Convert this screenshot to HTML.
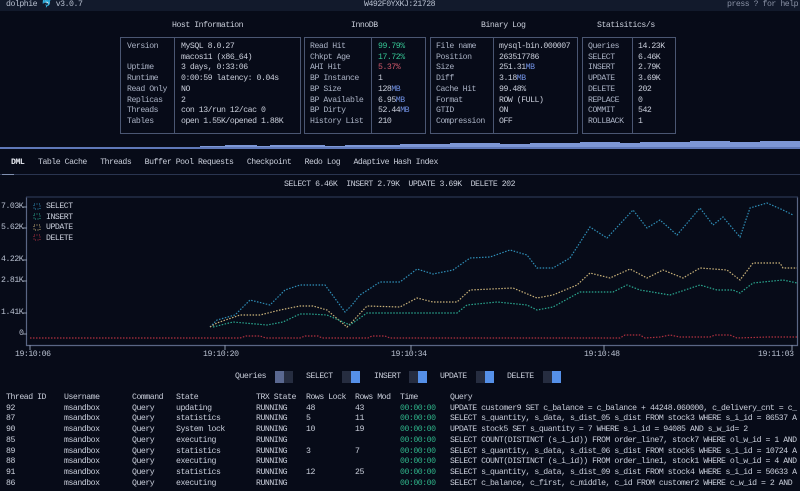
<!DOCTYPE html>
<html><head><meta charset="utf-8"><style>
*{margin:0;padding:0;box-sizing:border-box}
body{width:800px;height:491px;background:#070b18;color:#c9ceda;font-family:"Liberation Mono","DejaVu Sans Mono",monospace;font-size:8.2px;letter-spacing:-0.47px;line-height:10.7px;position:relative;overflow:hidden}
.a{position:absolute;white-space:pre}
.hdr{position:absolute;left:0;top:0;width:800px;height:11px;background:#121a2c}
.box{position:absolute;border:1px solid #4a5672}
.vl{position:absolute;top:0;bottom:0;width:1px;background:#4a5672}
.g{color:#35c493}.r{color:#d0586a}.b{color:#6f8fe0}
.lab{color:#aab2c4}
.tm{color:#2fb58a}
.sw{position:absolute;top:371px;width:18px;height:12px}
.sw i{position:absolute;top:0;width:9px;height:12px}
</style></head><body>
<div class="hdr"></div>
<div class="a" style="left:6px;top:0;color:#b8c0d0">dolphie <span style="color:#5aa8e0">🐬</span> v3.0.7</div>
<div class="a" style="left:364px;top:0;color:#b8c0d0">W492F0YXKJ:21728</div>
<div class="a" style="left:727px;top:0;color:#8890a4">press ? for help</div>

<div class="a" style="left:172px;top:21px">Host Information</div>
<div class="a" style="left:351px;top:21px">InnoDB</div>
<div class="a" style="left:481px;top:21px">Binary Log</div>
<div class="a" style="left:597px;top:21px">Statisitics/s</div>

<div class="box" style="left:120px;top:37px;width:181px;height:97px"><div class="vl" style="left:53px"></div></div>
<div class="a lab" style="left:127px;top:42px">Version
 
Uptime
Runtime
Read Only
Replicas
Threads
Tables</div>
<div class="a" style="left:181px;top:42px">MySQL 8.0.27
macos11 (x86_64)
3 days, 0:33:06
0:00:59 latency: 0.04s
NO
2
con 13/run 12/cac 0
open 1.55K/opened 1.88K</div>

<div class="box" style="left:304px;top:37px;width:122px;height:97px"><div class="vl" style="left:66px"></div></div>
<div class="a lab" style="left:310px;top:42px">Read Hit
Chkpt Age
AHI Hit
BP Instance
BP Size
BP Available
BP Dirty
History List</div>
<div class="a" style="left:378px;top:42px"><span class="g">99.79%</span>
<span class="g">17.72%</span>
<span class="r">5.37%</span>
1
128<span class="b">MB</span>
6.95<span class="b">MB</span>
52.44<span class="b">MB</span>
210</div>

<div class="box" style="left:430px;top:37px;width:148px;height:97px"><div class="vl" style="left:62px"></div></div>
<div class="a lab" style="left:436px;top:42px">File name
Position
Size
Diff
Cache Hit
Format
GTID
Compression</div>
<div class="a" style="left:499px;top:42px">mysql-bin.000007
263517786
251.31<span class="b">MB</span>
3.18<span class="b">MB</span>
99.48%
ROW (FULL)
ON
OFF</div>

<div class="box" style="left:582px;top:37px;width:94px;height:97px"><div class="vl" style="left:49px"></div></div>
<div class="a lab" style="left:588px;top:42px">Queries
SELECT
INSERT
UPDATE
DELETE
REPLACE
COMMIT
ROLLBACK</div>
<div class="a" style="left:638px;top:42px">14.23K
6.46K
2.79K
3.69K
202
0
542
1</div>

<svg class="a" style="left:0;top:136px" width="800" height="14">
<polygon fill="#7d97d6" points="0,12 200,12 200,10 225,10 225,9 257,9 257,10 270,10 270,9 325,9 325,10 345,10 345,9 400,9 400,8 450,8 450,7 500,7 500,8 530,8 530,7 580,7 580,6 620,6 620,7 640,7 640,6 690,6 690,5 730,5 730,6 760,6 760,5 800,5 800,12"/>
<rect x="0" y="11" width="800" height="2" fill="#5f78b8"/>
</svg>

<div class="a" style="left:11px;top:158px;font-weight:bold;color:#e6e9f0">DML</div>
<div class="a" style="left:38px;top:158px">Table Cache   Threads   Buffer Pool Requests   Checkpoint   Redo Log   Adaptive Hash Index</div>
<div class="a" style="left:0;top:174px;width:800px;height:1px;background:#2a3550"></div>
<div class="a" style="left:2px;top:174px;width:12px;height:1px;background:#8090b0"></div>

<div class="a" style="left:284px;top:180px">SELECT 6.46K  INSERT 2.79K  UPDATE 3.69K  DELETE 202</div>

<svg class="a" style="left:0;top:190px" width="800" height="175">
<g stroke="#5a6684" stroke-width="1.2" fill="none">
<polyline points="26.5,7 26.5,155.5 797.5,155.5 797.5,7"/>
<line x1="26" y1="7" x2="798" y2="7" stroke="#2a3550"/>
</g>
<g stroke="#8a94aa" stroke-width="1">
<line x1="30" y1="155" x2="30" y2="160"/><line x1="225" y1="155" x2="225" y2="160"/><line x1="411" y1="155" x2="411" y2="160"/><line x1="604" y1="155" x2="604" y2="160"/><line x1="792" y1="155" x2="792" y2="160"/>
<line x1="23" y1="17" x2="27" y2="17"/><line x1="23" y1="38" x2="27" y2="38"/><line x1="23" y1="70" x2="27" y2="70"/><line x1="23" y1="91" x2="27" y2="91"/><line x1="23" y1="123" x2="27" y2="123"/><line x1="23" y1="144" x2="27" y2="144"/>
</g>
<g fill="none" stroke-width="1.2" stroke-dasharray="1.5 1.5" transform="translate(0,-190)">
<polyline stroke="#b0303f" points="30,338 240,338 246,336 260,336 266,338 300,338 305,336 318,336 322,338 368,338 372,336 385,336 390,338 620,338 625,335 640,335 645,338 660,337 670,335 680,337 710,337 715,335 730,335 737,338 768,337 797,337"/>
<polyline stroke="#2f8fb8" points="210,327 217,320 235,315 250,300 270,305 285,290 300,285 325,285 345,312 352,305 360,295 380,282 400,282 417,269 433,274 453,270 470,258 490,257 510,250 527,255 537,268 553,268 570,258 590,227 607,238 633,210 647,228 660,220 677,235 700,208 713,225 723,217 740,237 750,208 767,203 783,210 793,215"/>
<polyline stroke="#c9b27a" points="210,327 217,323 240,315 260,315 280,310 300,306 313,306 327,310 347,327 352,322 367,306 400,307 417,298 433,302 457,302 470,290 513,288 537,298 553,295 577,285 590,273 610,278 630,269 647,278 663,270 683,278 700,268 727,270 740,280 753,263 780,263 783,268 797,268"/>
<polyline stroke="#2aa890" points="213,327 233,322 267,325 283,322 300,314 310,314 327,315 350,325 367,313 400,313 457,313 467,305 497,302 527,305 537,310 553,307 580,292 613,292 627,285 640,290 670,295 700,285 717,290 733,290 740,293 753,283 783,280 797,283"/>
</g>
<g fill="none" stroke-width="1" stroke-dasharray="1 1.5">
<rect x="34" y="14" width="6" height="5" stroke="#2f8fb8"/>
<rect x="34" y="24" width="6" height="5" stroke="#2aa890"/>
<rect x="34" y="35" width="6" height="5" stroke="#c9b27a"/>
<rect x="34" y="45" width="6" height="5" stroke="#b0303f"/>
</g>
</svg>
<div class="a" style="left:46px;top:202px;color:#c9ceda">SELECT
INSERT
UPDATE
DELETE</div>
<div class="a" style="left:1px;top:202px;color:#b8c0d0">7.03K
 
5.62K</div>
<div class="a" style="left:1px;top:255px;color:#b8c0d0">4.22K</div>
<div class="a" style="left:1px;top:276px;color:#b8c0d0">2.81K</div>
<div class="a" style="left:1px;top:308px;color:#b8c0d0">1.41K</div>
<div class="a" style="left:19px;top:329px;color:#b8c0d0">0</div>
<div class="a" style="left:15px;top:350px;color:#b8c0d0">19:10:06</div>
<div class="a" style="left:203px;top:350px;color:#b8c0d0">19:10:20</div>
<div class="a" style="left:391px;top:350px;color:#b8c0d0">19:10:34</div>
<div class="a" style="left:584px;top:350px;color:#b8c0d0">19:10:48</div>
<div class="a" style="left:758px;top:350px;color:#b8c0d0">19:11:03</div>

<div class="a" style="left:235px;top:372px">Queries</div>
<div class="sw" style="left:275px"><i style="left:0;background:#5a6890"></i><i style="left:9px;background:#262d40"></i></div>
<div class="a" style="left:306px;top:372px">SELECT</div>
<div class="sw" style="left:342px"><i style="left:0;background:#262d40"></i><i style="left:9px;background:#5590e8"></i></div>
<div class="a" style="left:374px;top:372px">INSERT</div>
<div class="sw" style="left:409px"><i style="left:0;background:#262d40"></i><i style="left:9px;background:#5590e8"></i></div>
<div class="a" style="left:440px;top:372px">UPDATE</div>
<div class="sw" style="left:476px"><i style="left:0;background:#262d40"></i><i style="left:9px;background:#5590e8"></i></div>
<div class="a" style="left:507px;top:372px">DELETE</div>
<div class="sw" style="left:543px"><i style="left:0;background:#262d40"></i><i style="left:9px;background:#5590e8"></i></div>

<div class="a" style="left:6px;top:393px">Thread ID
92
87
90
85
89
88
91
86</div>
<div class="a" style="left:64px;top:393px">Username
msandbox
msandbox
msandbox
msandbox
msandbox
msandbox
msandbox
msandbox</div>
<div class="a" style="left:132px;top:393px">Command
Query
Query
Query
Query
Query
Query
Query
Query</div>
<div class="a" style="left:176px;top:393px">State
updating
statistics
System lock
executing
statistics
executing
statistics
executing</div>
<div class="a" style="left:256px;top:393px">TRX State
RUNNING
RUNNING
RUNNING
RUNNING
RUNNING
RUNNING
RUNNING
RUNNING</div>
<div class="a" style="left:306px;top:393px">Rows Lock
48
5
10

3

12
</div>
<div class="a" style="left:355px;top:393px">Rows Mod
43
11
19

7

25
</div>
<div class="a" style="left:400px;top:393px">Time
<span class="tm">00:00:00
00:00:00
00:00:00
00:00:00
00:00:00
00:00:00
00:00:00
00:00:00</span></div>
<div class="a" style="left:450px;top:393px">Query
UPDATE customer9 SET c_balance = c_balance + 44248.060000, c_delivery_cnt = c_
SELECT s_quantity, s_data, s_dist_05 s_dist FROM stock3 WHERE s_i_id = 86537 A
UPDATE stock5 SET s_quantity = 7 WHERE s_i_id = 94085 AND s_w_id= 2
SELECT COUNT(DISTINCT (s_i_id)) FROM order_line7, stock7 WHERE ol_w_id = 1 AND
SELECT s_quantity, s_data, s_dist_06 s_dist FROM stock5 WHERE s_i_id = 10724 A
SELECT COUNT(DISTINCT (s_i_id)) FROM order_line1, stock1 WHERE ol_w_id = 4 AND
SELECT s_quantity, s_data, s_dist_09 s_dist FROM stock4 WHERE s_i_id = 50633 A
SELECT c_balance, c_first, c_middle, c_id FROM customer2 WHERE c_w_id = 2 AND </div>
</body></html>
